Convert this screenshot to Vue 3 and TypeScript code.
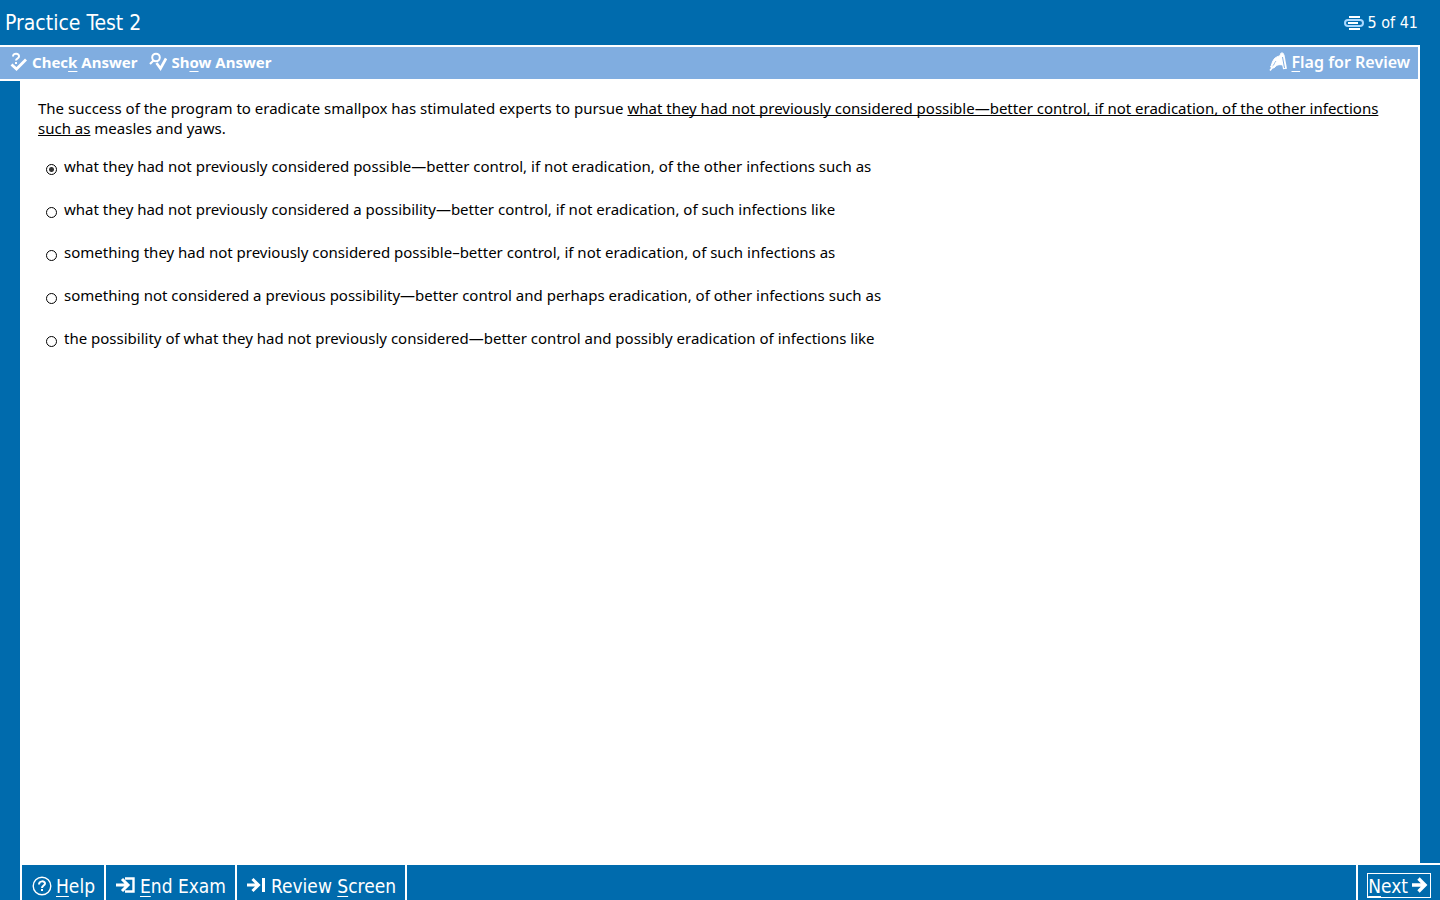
<script setup lang="ts">
import { ref } from 'vue'

const choices: string[] = [
  'what they had not previously considered possible—better control, if not eradication, of the other infections such as',
  'what they had not previously considered a possibility—better control, if not eradication, of such infections like',
  'something they had not previously considered possible–better control, if not eradication, of such infections as',
  'something not considered a previous possibility—better control and perhaps eradication, of other infections such as',
  'the possibility of what they had not previously considered—better control and possibly eradication of infections like',
]
const selected = ref(0)
</script>

<template>
  <div class="exam">
    <header class="titlebar">
      <h1>Practice Test 2</h1>
      <div class="progress">
        <svg width="20" height="16" viewBox="0 0 20 16" fill="none" stroke="currentColor" aria-hidden="true">
          <path d="M5 2h11M5 14h11" stroke-width="2" />
          <rect x="1" y="5" width="18" height="6" rx="3" stroke="#a9d8ff" stroke-width="2" />
          <path d="M4 8h10" stroke-width="2" />
        </svg>
        <span>5 of 41</span>
      </div>
    </header>

    <div class="toolbar">
      <button type="button">
        <svg width="18" height="20" viewBox="0 0 18 20" fill="none" stroke="currentColor" aria-hidden="true">
          <path d="M3 4.5c0-4 6.5-3.5 6 0 0 2-3 2-3 4" stroke-width="2" />
          <path d="M6 10v2" stroke-width="2" />
          <path d="M1.5 12.5l5 4.5L16 7.5" stroke-width="2.8" />
        </svg>
        <span>Chec<u>k</u> Answer</span>
      </button>
      <button type="button">
        <svg width="18" height="20" viewBox="0 0 18 20" fill="none" stroke="currentColor" aria-hidden="true">
          <circle cx="7" cy="5.5" r="3.8" stroke-width="2" />
          <path d="M4.5 8.5L1 12" stroke-width="2.2" />
          <path d="M7.5 11l4 5.5 5.5-10" stroke-width="2.6" />
        </svg>
        <span>Sh<u>o</u>w Answer</span>
      </button>
      <button type="button" class="flag">
        <svg width="18" height="20" viewBox="0 0 18 20" fill="none" stroke="currentColor" aria-hidden="true">
          <path d="M1.5 15c1.5-2 1-4 3-7C6.5 4.500 9 5 12 3l3 10.5c-4-1.500-7-1-9 1.5-1 1.5-3 1-4.5 0z" fill="currentColor" />
          <path d="M13.5 3l2.5 14" stroke-width="4" />
          <path d="M13.5 5l2 11" stroke="#80ade0" stroke-width="1" />
          <path d="M1 18.5l4-5" stroke-width="1.6" />
          <path d="M3.5 14c2-1 1.5-3 3.5-5" stroke="#80ade0" stroke-width="0.8" />
          <circle cx="13" cy="2.5" r="1.6" fill="currentColor" />
        </svg>
        <span><u>F</u>lag for Review</span>
      </button>
    </div>

    <main class="content">
      <p class="question">
        The success of the program to eradicate smallpox has stimulated experts to pursue
        <span class="marked">what they had not previously considered possible—better control, if not eradication, of the other infections such as</span>
        measles and yaws.
      </p>
      <div class="choices" role="radiogroup" aria-label="Answer choices">
        <label v-for="(choice, i) in choices" :key="i">
          <input v-model="selected" type="radio" name="answer" :value="i" />
          <span>{{ choice }}</span>
        </label>
      </div>
    </main>

    <footer class="navbar">
      <button type="button">
        <svg width="20" height="20" viewBox="0 0 20 20" fill="none" stroke="currentColor" aria-hidden="true">
          <circle cx="10" cy="10" r="8.8" stroke-width="1.4" />
          <path d="M7 8.5c0-4 6-4 6-1 0 2-3 2-3 4.5" stroke-width="2" />
          <path d="M10 13v2" stroke-width="2" />
        </svg>
        <span><u>H</u>elp</span>
      </button>
      <button type="button">
        <svg width="20" height="20" viewBox="0 0 20 20" fill="none" stroke="currentColor" aria-hidden="true">
          <path d="M0 9h12M6 3l6 6-6 6" stroke-width="3" />
          <path d="M9 2.500h8.500v13H9" stroke-width="2.4" />
        </svg>
        <span><u>E</u>nd Exam</span>
      </button>
      <button type="button">
        <svg width="20" height="20" viewBox="0 0 20 20" fill="none" stroke="currentColor" aria-hidden="true">
          <path d="M0 9h11M5.5 3L11.500 9l-6 6" stroke-width="3" />
          <path d="M16.5 2v14" stroke-width="3" />
        </svg>
        <span>Review <u>S</u>creen</span>
      </button>
      <div class="next">
        <button type="button">
          <span><u>N</u>ext</span>
          <svg width="16" height="20" viewBox="0 0 16 20" fill="none" stroke="currentColor" aria-hidden="true">
            <path d="M0 9h13M6.5 2.500L13 9l-6.5 6.5" stroke-width="3.4" />
          </svg>
        </button>
      </div>
    </footer>
  </div>
</template>

<style>
body {
  background: #006bad;
}
</style>

<style scoped>
.exam {
  display: flex;
  flex-direction: column;
  min-height: 100vh;
  background: #006bad;
  color: #fff;
  font-family: Tahoma, "DejaVu Sans Condensed", "Noto Sans", sans-serif;
}
button {
  display: flex;
  align-items: center;
  gap: 4px;
  padding: 0;
  border: 0;
  background: none;
  color: inherit;
  font: inherit;
  white-space: nowrap;
}
svg {
  flex: none;
}
u {
  text-underline-offset: 3px;
  text-decoration-thickness: 1px;
}
.titlebar {
  display: flex;
  justify-content: space-between;
  align-items: center;
  height: 45px;
  padding: 0 22px 0 5px;
}
h1 {
  margin: 0;
  font-size: 21px;
  font-weight: 400;
}
.progress {
  display: flex;
  align-items: center;
  gap: 4px;
  font-size: 16px;
}
.toolbar {
  display: flex;
  align-items: center;
  gap: 12px;
  height: 30px;
  margin-right: 20px;
  padding: 0 8px 2px 10px;
  border: 2px solid #fff;
  border-left: 0;
  background: #80ade0;
  font-family: "Noto Sans", sans-serif;
  font-size: 15px;
  font-weight: 700;
}
.flag {
  margin-left: auto;
  font-size: 16px;
  font-weight: 600;
}
.content {
  flex: 1;
  margin: 0 20px;
  padding: 17px 18px;
  background: #fff;
  color: #000;
  font-family: "Noto Sans", sans-serif;
  font-size: 15px;
  line-height: 20px;
}
.question {
  margin: 0;
}
.marked {
  text-decoration: underline;
  text-decoration-thickness: 1px;
  text-decoration-skip-ink: none;
}
.choices {
  display: flex;
  flex-direction: column;
  gap: 23px;
  margin-top: 18px;
  padding-left: 8px;
}
label {
  display: flex;
  gap: 7px;
}
input {
  appearance: none;
  flex: none;
  width: 11px;
  height: 11px;
  margin: 8px 0 0;
  border: 1px solid #000;
  border-radius: 50%;
}
input:checked {
  background: radial-gradient(circle, #333 0 2px, #fff 3px);
}
.navbar {
  display: flex;
  height: 35px;
  margin-left: 20px;
  border-top: 2px solid #fff;
  border-left: 2px solid #fff;
  font-size: 19px;
}
.navbar > button {
  padding: 6px 9px 0 10px;
  border-right: 2px solid #fff;
}
.next {
  display: flex;
  align-items: flex-end;
  margin-left: auto;
  padding: 0 9px 2px;
  border-left: 2px solid #fff;
}
.next button {
  height: 25px;
  padding-right: 2px;
  border: 1px solid #fff;
}
</style>
